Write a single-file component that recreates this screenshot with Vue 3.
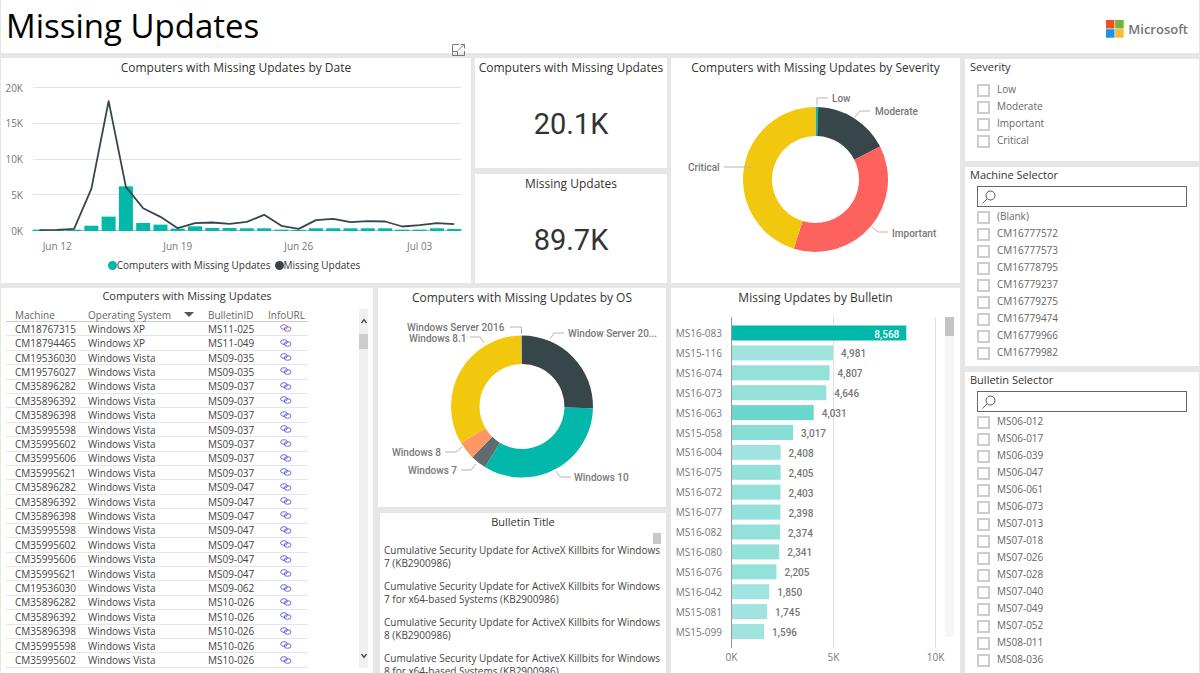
<script setup>
const machines = [
  ['CM18767315', 'Windows XP', 'MS11-025'],
  ['CM18794465', 'Windows XP', 'MS11-049'],
  ['CM19536030', 'Windows Vista', 'MS09-035'],
  ['CM19576027', 'Windows Vista', 'MS09-035'],
  ['CM35896282', 'Windows Vista', 'MS09-037'],
  ['CM35896392', 'Windows Vista', 'MS09-037'],
  ['CM35896398', 'Windows Vista', 'MS09-037'],
  ['CM35995598', 'Windows Vista', 'MS09-037'],
  ['CM35995602', 'Windows Vista', 'MS09-037'],
  ['CM35995606', 'Windows Vista', 'MS09-037'],
  ['CM35995621', 'Windows Vista', 'MS09-037'],
  ['CM35896282', 'Windows Vista', 'MS09-047'],
  ['CM35896392', 'Windows Vista', 'MS09-047'],
  ['CM35896398', 'Windows Vista', 'MS09-047'],
  ['CM35995598', 'Windows Vista', 'MS09-047'],
  ['CM35995602', 'Windows Vista', 'MS09-047'],
  ['CM35995606', 'Windows Vista', 'MS09-047'],
  ['CM35995621', 'Windows Vista', 'MS09-047'],
  ['CM19536030', 'Windows Vista', 'MS09-062'],
  ['CM35896282', 'Windows Vista', 'MS10-026'],
  ['CM35896392', 'Windows Vista', 'MS10-026'],
  ['CM35896398', 'Windows Vista', 'MS10-026'],
  ['CM35995598', 'Windows Vista', 'MS10-026'],
  ['CM35995602', 'Windows Vista', 'MS10-026'],
]

const slicers = [
  { id: 'severity', title: 'Severity', search: false, items: ['Low', 'Moderate', 'Important', 'Critical'] },
  {
    id: 'machine', title: 'Machine Selector', search: true,
    items: ['(Blank)', 'CM16777572', 'CM16777573', 'CM16778795', 'CM16779237', 'CM16779275', 'CM16779474', 'CM16779966', 'CM16779982'],
  },
  {
    id: 'bulletin', title: 'Bulletin Selector', search: true,
    items: ['MS06-012', 'MS06-017', 'MS06-039', 'MS06-047', 'MS06-061', 'MS06-073', 'MS07-013', 'MS07-018', 'MS07-026', 'MS07-028', 'MS07-040', 'MS07-049', 'MS07-052', 'MS08-011', 'MS08-036'],
  },
]

const bulletinTitles = [
  'Cumulative Security Update for ActiveX Killbits for Windows 7 (KB2900986)',
  'Cumulative Security Update for ActiveX Killbits for Windows 7 for x64-based Systems (KB2900986)',
  'Cumulative Security Update for ActiveX Killbits for Windows 8 (KB2900986)',
  'Cumulative Security Update for ActiveX Killbits for Windows 8 for x64-based Systems (KB2900986)',
]

// Daily series, Jun 11 to Jul 05
const computers = [50, 40, 50, 600, 1870, 6110, 980, 750, 190, 510, 280, 280, 240, 240, 50, 20, 240, 240, 240, 240, 240, 50, 50, 240, 150]
const missing = [50, 90, 230, 5830, 18090, 6110, 3120, 1910, 330, 1030, 1120, 930, 1210, 2190, 650, 230, 1450, 1630, 1170, 1310, 1260, 560, 750, 1030, 890]
const dayX = (i) => 38.5 + i * 17.28
const dayY = (v) => 152.5 - v * 0.00715
const missingLine = missing.map((v, i) => `${dayX(i)},${dayY(v)}`).join(' ')
const dateTicks = [[1.02, 'Jun 12'], [8, 'Jun 19'], [15, 'Jun 26'], [22, 'Jul 03']]

const bulletins = [
  ['MS16-083', 8568, '#01b8aa'],
  ['MS15-116', 4981, '#a1e4df'],
  ['MS16-074', 4807, '#93e1d9'],
  ['MS16-073', 4646, '#93e1d9'],
  ['MS16-063', 4031, '#6bd6cd'],
  ['MS15-058', 3017, '#85ddd5'],
  ['MS16-004', 2408, '#a1e4df'],
  ['MS16-075', 2405, '#93e1d9'],
  ['MS16-072', 2403, '#93e1d9'],
  ['MS16-077', 2398, '#93e1d9'],
  ['MS16-082', 2374, '#93e1d9'],
  ['MS16-080', 2341, '#93e1d9'],
  ['MS16-076', 2205, '#93e1d9'],
  ['MS16-042', 1850, '#a1e4df'],
  ['MS15-081', 1745, '#a1e4df'],
  ['MS15-099', 1596, '#a1e4df'],
]
const barX = (v) => 60.5 + v * 0.0204
const barY = (i) => 25 + i * 19.9

function slice(cx, cy, outer, inner, from, to) {
  const pt = (r, a) => {
    const t = (a * Math.PI) / 180
    return `${(cx + r * Math.sin(t)).toFixed(2)} ${(cy - r * Math.cos(t)).toFixed(2)}`
  }
  const big = to - from > 180 ? 1 : 0
  return `M${pt(outer, from)}A${outer} ${outer} 0 ${big} 1 ${pt(outer, to)}L${pt(inner, to)}A${inner} ${inner} 0 ${big} 0 ${pt(inner, from)}Z`
}
const severity = [
  [0, 2.2, '#01b8aa'],
  [2.2, 63, '#374649'],
  [63, 197.4, '#fd625e'],
  [197.4, 360, '#f2c80f'],
].map(([a, b, fill]) => ({ d: slice(144.5, 101.5, 72.5, 43.5, a, b), fill }))
const systems = [
  [0, 91.5, '#374649'],
  [91.5, 211.4, '#01b8aa'],
  [211.4, 224.4, '#5f6b6d'],
  [224.4, 239.2, '#fe9666'],
  [239.2, 359.3, '#f2c80f'],
  [359.3, 360, '#a69998'],
].map(([a, b, fill]) => ({ d: slice(144, 98.5, 71, 42.5, a, b), fill }))
</script>

<template>
  <div class="report">
    <header class="banner">
      <h1>Missing Updates</h1>
      <div class="brand">
        <svg width="18" height="18" viewBox="0 0 18 18" aria-hidden="true">
          <path fill="#f04e23" d="M0 0h8.500v8.500H0z" />
          <path fill="#6fb73c" d="M9.200 0h8.500v8.500H9.200z" />
          <path fill="#1496e8" d="M0 9.200h8.500v8.500H0z" />
          <path fill="#fdb933" d="M9.200 9.200h8.500v8.500H9.200z" />
        </svg>
        <span>Microsoft</span>
      </div>
    </header>

    <main class="body">
      <div class="visuals">
        <div class="row top">
          <section class="panel date">
            <button class="focus" type="button" aria-label="Focus mode">
              <svg width="13" height="12" viewBox="0 0 13 12" fill="none" stroke="#777">
                <path d="M7 .5H.5v11h12V7M.5 7.500h5v4M6 6.500l6-6M8.500.5h4v4" />
              </svg>
            </button>
            <h2>Computers with Missing Updates by Date</h2>
            <svg class="chart" viewBox="0 0 470 179">
              <g v-for="k in [0, 5, 10, 15, 20]" :key="k">
                <line x1="32" x2="460" :y1="Math.floor(dayY(k * 1000)) + 0.5" :y2="Math.floor(dayY(k * 1000)) + 0.5" :stroke="k ? '#e4e4e4' : '#b5b5b5'" />
                <text class="axis" x="22" :y="dayY(k * 1000) + 4" text-anchor="end">{{ k }}K</text>
              </g>
              <rect v-for="(v, i) in computers" :key="i" :x="dayX(i) - 7" :y="dayY(v) - 0.5" width="14" :height="153 - dayY(v) + 0.5" fill="#01b8aa" />
              <polyline :points="missingLine" fill="none" stroke="#374649" stroke-width="1.800" stroke-linejoin="round" />
              <text v-for="[i, label] in dateTicks" :key="label" class="axis" :x="dayX(i)" y="172" text-anchor="middle">{{ label }}</text>
            </svg>
            <ul class="legend">
              <li class="computers">Computers with Missing Updates</li>
              <li>Missing Updates</li>
            </ul>
          </section>

          <div class="cards">
            <section class="panel card">
              <h2>Computers with Missing Updates</h2>
              <p>20.1K</p>
            </section>
            <section class="panel card">
              <h2>Missing Updates</h2>
              <p>89.7K</p>
            </section>
          </div>

          <section class="panel">
            <h2>Computers with Missing Updates by Severity</h2>
            <svg class="chart" viewBox="0 0 289 205">
              <path v-for="s in severity" :key="s.d" :d="s.d" :fill="s.fill" />
              <g class="leader">
                <path d="M146 27V20h11M184 39l5-6h10M201 149l6 5h10M82 90l-6-1H53" />
              </g>
              <text class="data" x="161" y="24">Low</text>
              <text class="data" x="204" y="37">Moderate</text>
              <text class="data" x="221" y="159">Important</text>
              <text class="data" x="17" y="93">Critical</text>
            </svg>
          </section>
        </div>

        <div class="row bottom">
          <section class="panel machines">
            <h2>Computers with Missing Updates</h2>
            <div class="scroller">
              <table>
                <thead>
                  <tr>
                    <th class="machine">Machine</th>
                    <th class="os">Operating System<span class="sort"></span></th>
                    <th class="bulletin">BulletinID</th>
                    <th class="info">InfoURL</th>
                  </tr>
                </thead>
                <tbody>
                  <tr v-for="(m, i) in machines" :key="i">
                    <td class="machine">{{ m[0] }}</td>
                    <td class="os">{{ m[1] }}</td>
                    <td class="bulletin">{{ m[2] }}</td>
                    <td class="info">
                      <a href="#" :class="{ visited: i === 0 }" :aria-label="'Open ' + m[2]">
                        <svg width="12" height="9" viewBox="0 0 12 9" fill="none" stroke="currentColor">
                          <ellipse cx="4" cy="3" rx="3.400" ry="2.300" />
                          <ellipse cx="7.600" cy="5" rx="3.400" ry="2.300" />
                        </svg>
                      </a>
                    </td>
                  </tr>
                </tbody>
              </table>
              <div class="track">
                <button type="button" aria-label="Scroll up">
                  <svg width="8" height="6" viewBox="0 0 8 6" fill="none" stroke="#444" stroke-width="1.300"><path d="M1.500 5L4 1.500 6.500 5" /></svg>
                </button>
                <div class="thumb"></div>
                <button type="button" aria-label="Scroll down">
                  <svg width="8" height="6" viewBox="0 0 8 6" fill="none" stroke="#444" stroke-width="1.300"><path d="M1.500 1L4 4.500 6.500 1" /></svg>
                </button>
              </div>
            </div>
          </section>

          <div class="middle">
            <section class="panel">
              <h2>Computers with Missing Updates by OS</h2>
              <svg class="chart" viewBox="0 0 288 199">
                <path v-for="s in systems" :key="s.d" :d="s.d" :fill="s.fill" />
                <g class="leader">
                  <path d="M143.500 26v-7H132M106 35l-4-6H92M172 31l4-6h10M178 163l4 6h11M84 139l-6 5H67M98 156l-5 6H83" />
                </g>
                <text class="data" x="29" y="23">Windows Server 2016</text>
                <text class="data" x="31" y="34">Windows 8.1</text>
                <text class="data" x="190" y="29">Window Server 20...</text>
                <text class="data" x="196" y="173">Windows 10</text>
                <text class="data" x="14" y="148">Windows 8</text>
                <text class="data" x="30" y="166">Windows 7</text>
              </svg>
            </section>
            <section class="panel titles">
              <h2>Bulletin Title</h2>
              <div class="thumb"></div>
              <ul>
                <li v-for="t in bulletinTitles" :key="t">{{ t }}</li>
              </ul>
            </section>
          </div>

          <section class="panel">
            <h2>Missing Updates by Bulletin</h2>
            <svg class="chart" viewBox="0 0 289 365">
              <g v-for="k in [5, 10]" :key="k">
                <line :x1="barX(k * 1000)" :x2="barX(k * 1000)" y1="9" y2="340" stroke="#e0e0e0" />
              </g>
              <text v-for="k in [0, 5, 10]" :key="k" class="axis" :x="barX(k * 1000)" y="353" text-anchor="middle">{{ k }}K</text>
              <g v-for="([name, value, fill], i) in bulletins" :key="name">
                <text class="axis" x="51" :y="barY(i) + 4" text-anchor="end">{{ name }}</text>
                <rect x="61" :y="barY(i) - 7.5" :width="barX(value) - 61" height="15" :fill="fill" />
                <text v-if="i" class="data" :x="barX(value) + 8" :y="barY(i) + 4.5">{{ value.toLocaleString('en-US') }}</text>
                <text v-else class="data inside" :x="barX(value) - 7" :y="barY(i) + 4.5" text-anchor="end">{{ value.toLocaleString('en-US') }}</text>
              </g>
              <line x1="60.500" x2="60.500" y1="9" y2="340" stroke="#999" />
              <rect x="274" y="9" width="9" height="320" fill="#f6f6f6" />
              <rect x="274" y="9" width="9" height="19" fill="#c3c3c3" />
            </svg>
          </section>
        </div>
      </div>

      <aside class="slicers">
        <section v-for="s in slicers" :key="s.id" class="panel slicer" :class="'by-' + s.id">
          <h3>{{ s.title }}</h3>
          <div v-if="s.search" class="search">
            <svg width="14" height="14" viewBox="0 0 14 14" fill="none" stroke="#555">
              <circle cx="8.500" cy="5.500" r="4.500" />
              <path d="M5.300 8.700L.5 13.300" />
            </svg>
            <input type="text" :aria-label="'Search ' + s.title" />
          </div>
          <ul>
            <li v-for="item in s.items" :key="item">
              <label><input type="checkbox" /><span>{{ item }}</span></label>
            </li>
          </ul>
        </section>
      </aside>
    </main>
  </div>
</template>

<style>
body {
  background: #e6e6e6;
}
</style>

<style scoped>
.report {
  min-height: 100vh;
  background: #e6e6e6;
  color: #333;
  font-family: "Open Sans", "Noto Sans", sans-serif;
  font-size: 10px;
}
h1, h2, h3, p, ul {
  margin: 0;
  padding: 0;
  font-weight: 400;
}
ul {
  list-style: none;
}
button {
  border: 0;
  padding: 0;
  background: none;
  display: flex;
}
.banner {
  height: 53px;
  margin: 0 1px 5px;
  padding: 0 11px 0 5px;
  background: #fff;
  display: flex;
  justify-content: space-between;
  align-items: center;
}
h1 {
  padding-bottom: 2px;
  font-size: 33px;
  line-height: 51px;
  color: #000;
}
.brand {
  display: flex;
  align-items: center;
  gap: 4px;
  margin-top: 4px;
  font-size: 13px;
  line-height: 18px;
  font-weight: 600;
  color: #737373;
}
.body {
  margin: 0 1px;
  display: grid;
  grid-template-columns: minmax(0, 959fr) minmax(0, 234fr);
  gap: 5px;
}
.visuals {
  display: flex;
  flex-direction: column;
  gap: 5px;
}
.row {
  display: grid;
}
.top {
  grid-template-columns: minmax(0, 470fr) minmax(0, 192fr) minmax(0, 289fr);
  gap: 4px;
}
.bottom {
  grid-template-columns: minmax(0, 372fr) minmax(0, 288fr) minmax(0, 289fr);
  gap: 5px;
}
.panel {
  background: #fff;
}
h2 {
  font-size: 12px;
  line-height: 20px;
  text-align: center;
  white-space: nowrap;
}
.chart {
  display: block;
  width: 100%;
  height: auto;
}
.axis {
  font-size: 10px;
  fill: #777;
}
.legend {
  display: flex;
  justify-content: center;
  gap: 4px;
  padding-right: 4px;
  line-height: 16px;
}
.legend li {
  display: flex;
  align-items: center;
}
.legend li::before {
  content: "";
  width: 9px;
  height: 9px;
  border-radius: 50%;
  background: #374649;
}
.legend .computers::before {
  background: #01b8aa;
}
.data {
  font-family: Roboto, sans-serif;
  font-size: 10px;
  font-weight: 500;
  fill: #777;
}
.inside {
  fill: #fff;
}
.leader {
  fill: none;
  stroke: #b5b5b5;
}
.date {
  position: relative;
}
.focus {
  position: absolute;
  right: 6px;
  top: -14px;
}
.cards {
  display: grid;
  grid-template-rows: 1fr 1fr;
  gap: 6px;
}
.card {
  display: flex;
  flex-direction: column;
}
.card p {
  flex: 1;
  display: flex;
  align-items: center;
  justify-content: center;
  padding-top: 3px;
  font-family: Roboto, sans-serif;
  font-size: 29px;
  line-height: 30px;
}
.machines h2 {
  font-size: 11px;
  line-height: 16px;
}
.scroller {
  display: flex;
  justify-content: space-between;
  padding: 5px 5px 0;
}
table {
  width: 302px;
  height: 359px;
  border-collapse: collapse;
  table-layout: fixed;
}
th, td {
  padding: 0;
  text-align: left;
  font-weight: 400;
  line-height: 12px;
  color: #444;
  border-bottom: 1px solid #e6e6e6;
  white-space: nowrap;
}
th {
  color: #666;
  border-color: #ccc;
}
.machine {
  width: 73px;
  padding-left: 9px;
}
.os {
  width: 120px;
}
.bulletin {
  width: 60px;
}
.sort {
  display: inline-block;
  margin-left: 13px;
  vertical-align: 2px;
  border: 5px solid transparent;
  border-top-color: #555;
  border-bottom: 0;
}
td.info {
  padding-left: 12px;
}
.info a {
  display: flex;
  color: #6a6ae0;
}
.info a.visited {
  color: #9a6ab8;
}
.track {
  width: 9px;
  background: #f0f0f0;
  display: flex;
  flex-direction: column;
  align-items: center;
  padding: 9px 0;
}
.track .thumb {
  width: 9px;
  height: 15px;
  margin: 10px 0 auto;
  background: #cdcdcd;
}
.middle {
  display: flex;
  flex-direction: column;
  gap: 6px;
}
.titles {
  flex: 1;
  margin-left: 2px;
}
.titles h2 {
  font-size: 11px;
  line-height: 18px;
}
.titles ul {
  height: 129px;
  padding-left: 4px;
  overflow: hidden;
  color: #444;
}
.titles li {
  line-height: 13px;
  margin-bottom: 10px;
}
.titles .thumb {
  width: 8px;
  height: 11px;
  margin: 2px 5px 0 auto;
  background: #c8c8c8;
}
.slicers {
  display: grid;
  grid-template-rows: auto auto 1fr;
  gap: 6px;
  padding: 1px 0 2px;
}
.slicer {
  padding: 0 12px 5px;
}
h3 {
  margin-left: -7px;
  font-size: 11px;
  line-height: 16px;
}
.by-severity ul {
  margin-top: 6px;
  margin-bottom: 7px;
}
.search {
  display: flex;
  align-items: center;
  height: 19px;
  margin: 3px 0 1px;
  padding-left: 4px;
  border: 1px solid #666;
}
.search input {
  flex: 1;
  min-width: 0;
  border: 0;
  outline: 0;
  font: inherit;
}
label {
  display: flex;
  align-items: center;
  gap: 7px;
  line-height: 17px;
  color: #666;
}
label input {
  appearance: none;
  width: 13px;
  height: 13px;
  margin: 1px 0 0;
  border: 2px solid #cdcdcd;
  background: #fff;
}
</style>
